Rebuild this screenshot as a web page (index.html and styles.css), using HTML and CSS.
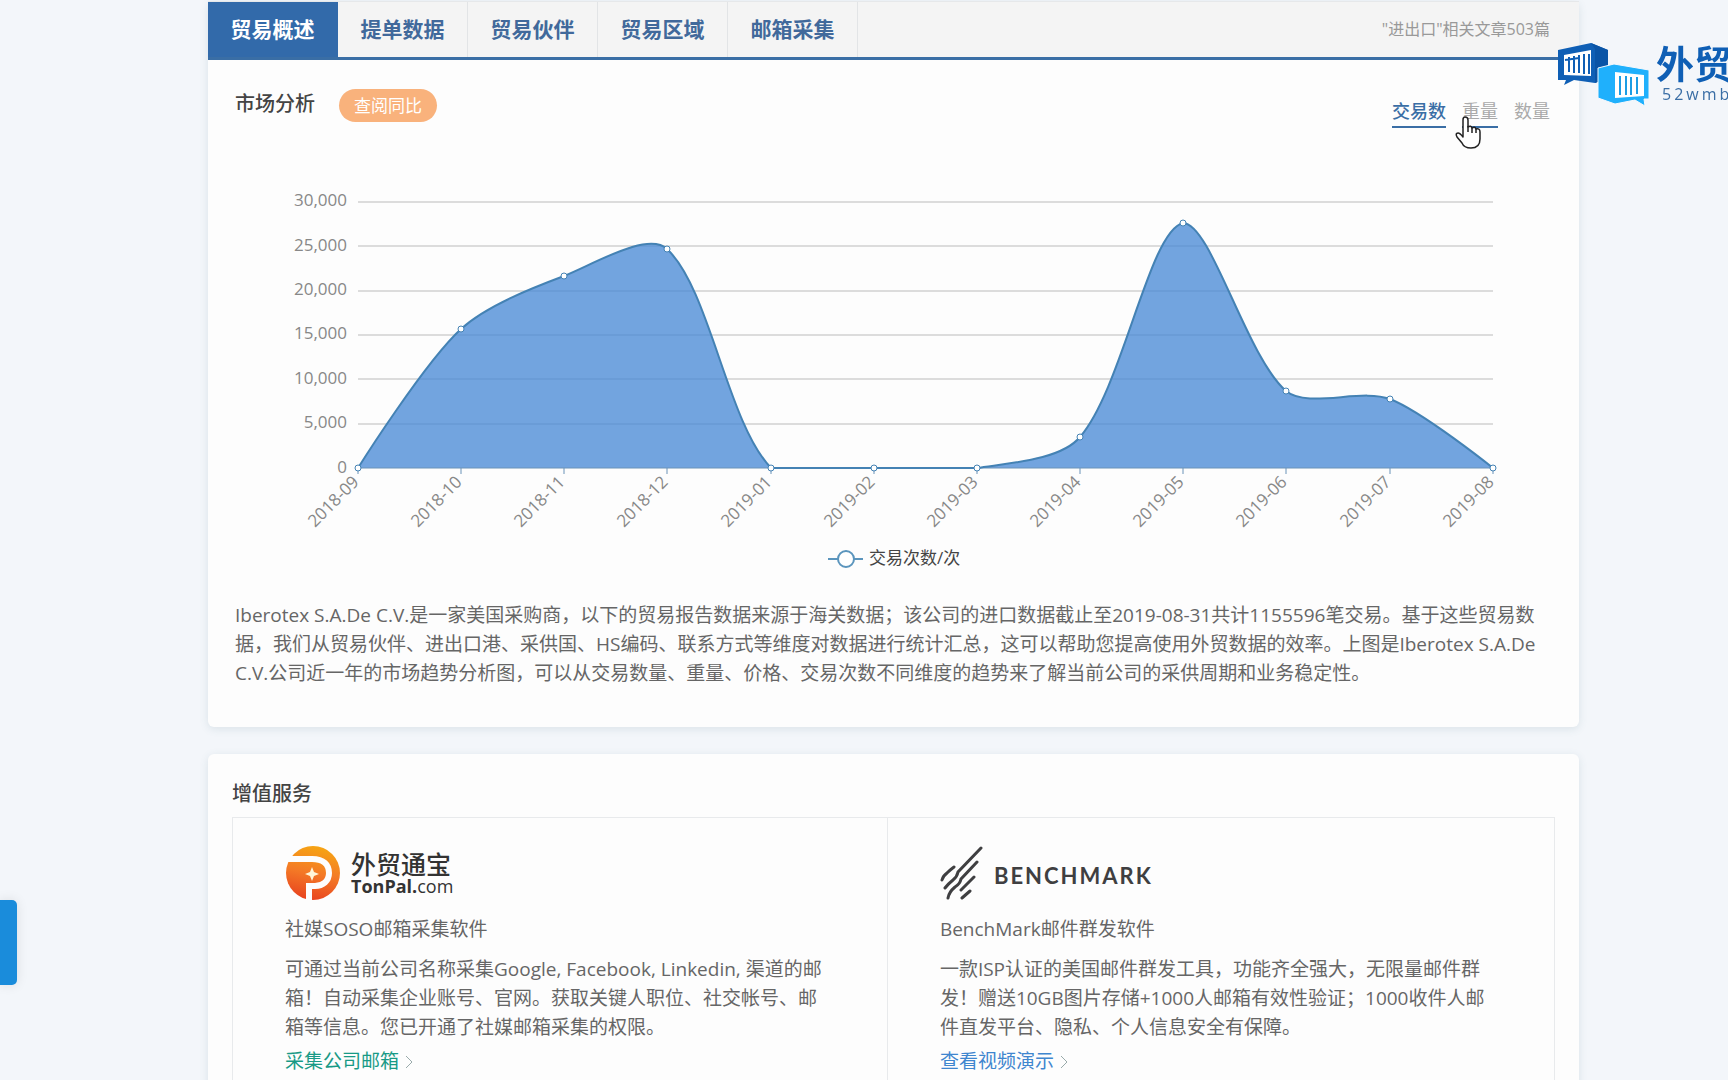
FILE: index.html
```html
<!DOCTYPE html>
<html lang="zh-CN">
<head>
<meta charset="utf-8">
<meta name="viewport" content="width=device-width, initial-scale=1">
<title>贸易概述</title>
<link rel="stylesheet" href="styles.css">
</head>
<body>
<main class="page">
  <section class="card">
    <nav class="tabs">
      <button class="tab tab-active" type="button">贸易概述</button>
      <button class="tab" type="button">提单数据</button>
      <button class="tab" type="button">贸易伙伴</button>
      <button class="tab" type="button">贸易区域</button>
      <button class="tab" type="button">邮箱采集</button>
      <a class="articles" href="#">"进出口"相关文章503篇</a>
    </nav>
    <header class="market-head">
      <h2 class="heading">市场分析</h2>
      <button class="pill" type="button">查阅同比</button>
      <div class="metrics">
        <button class="metric metric-active" type="button">交易数</button>
        <button class="metric metric-hover" type="button">重量</button>
        <button class="metric" type="button">数量</button>
      </div>
    </header>
    <div class="market-body">
      <svg class="chart" viewBox="0 0 1315 420" role="img" aria-label="交易次数">
        <path class="grid" d="M123 42H1258M123 86H1258M123 131H1258M123 175H1258M123 219H1258M123 264H1258"/>
        <path class="area" d="M123 308C123 308 189 203 226 169C251 146 297 128 329 116C359 104 413 71 432 89C475 129 492 262 536 308C554 308 608 308 639 308C670 308 711 308 742 308C774 303 826 300 845 277C888 227 914 71 948 63C976 63 1011 196 1051 231C1073 249 1126 228 1155 239C1188 252 1258 308 1258 308Z"/>
        <path class="axis" d="M123 308H1258M123 308V314M226 308V314M329 308V314M432 308V314M536 308V314M639 308V314M742 308V314M845 308V314M948 308V314M1051 308V314M1155 308V314M1258 308V314"/>
        <path class="curve" d="M123 308C123 308 189 203 226 169C251 146 297 128 329 116C359 104 413 71 432 89C475 129 492 262 536 308C554 308 608 308 639 308C670 308 711 308 742 308C774 303 826 300 845 277C888 227 914 71 948 63C976 63 1011 196 1051 231C1073 249 1126 228 1155 239C1188 252 1258 308 1258 308"/>
        <g class="dots">
          <circle cx="123" cy="308" r="3"/><circle cx="226" cy="169" r="3"/><circle cx="329" cy="116" r="3"/><circle cx="432" cy="89" r="3"/><circle cx="536" cy="308" r="3"/><circle cx="639" cy="308" r="3"/><circle cx="742" cy="308" r="3"/><circle cx="845" cy="277" r="3"/><circle cx="948" cy="63" r="3"/><circle cx="1051" cy="231" r="3"/><circle cx="1155" cy="239" r="3"/><circle cx="1258" cy="308" r="3"/>
        </g>
        <g class="labels">
          <text x="112" y="46">30,000</text>
          <text x="112" y="91">25,000</text>
          <text x="112" y="135">20,000</text>
          <text x="112" y="179">15,000</text>
          <text x="112" y="224">10,000</text>
          <text x="112" y="268">5,000</text>
          <text x="112" y="313">0</text>
          <text transform="translate(125 323) rotate(-45)">2018-09</text>
          <text transform="translate(228 323) rotate(-45)">2018-10</text>
          <text transform="translate(331 323) rotate(-45)">2018-11</text>
          <text transform="translate(434 323) rotate(-45)">2018-12</text>
          <text transform="translate(538 323) rotate(-45)">2019-01</text>
          <text transform="translate(641 323) rotate(-45)">2019-02</text>
          <text transform="translate(744 323) rotate(-45)">2019-03</text>
          <text transform="translate(847 323) rotate(-45)">2019-04</text>
          <text transform="translate(950 323) rotate(-45)">2019-05</text>
          <text transform="translate(1053 323) rotate(-45)">2019-06</text>
          <text transform="translate(1157 323) rotate(-45)">2019-07</text>
          <text transform="translate(1260 323) rotate(-45)">2019-08</text>
        </g>
        <path class="key" d="M593 399H628"/>
        <circle class="key" cx="611" cy="399" r="8"/>
        <text class="legend" x="634" y="404">交易次数/次</text>
      </svg>
      <p class="summary">Iberotex S.A.De C.V.是一家美国采购商，以下的贸易报告数据来源于海关数据；该公司的进口数据截止至2019-08-31共计1155596笔交易。基于这些贸易数据，我们从贸易伙伴、进出口港、采供国、HS编码、联系方式等维度对数据进行统计汇总，这可以帮助您提高使用外贸数据的效率。上图是Iberotex S.A.De C.V.公司近一年的市场趋势分析图，可以从交易数量、重量、价格、交易次数不同维度的趋势来了解当前公司的采供周期和业务稳定性。</p>
    </div>
  </section>

  <section class="card services">
    <h2 class="heading">增值服务</h2>
    <div class="service-grid">
      <article class="service">
        <div class="brand">
          <svg width="55" height="55" viewBox="0 0 55 55" aria-hidden="true">
            <defs><linearGradient id="tp" x1="0.600" y1="0" x2="0.400" y2="1"><stop offset="0" stop-color="#f6a513"/><stop offset="0.500" stop-color="#f47a26"/><stop offset="1" stop-color="#e8431f"/></linearGradient></defs>
            <circle cx="28" cy="27" r="27" fill="url(#tp)"/>
            <path d="M0 5H10L6 11H0z" fill="#fdfdfd"/>
            <path d="M0 13H27C39 13 44 19 44 27C44 35 38 40 30 40H24V55" fill="none" stroke="#fdfdfd" stroke-width="6"/>
            <path d="M27 21L29 26L34 28L29 30L27 35L25 30L20 28L25 26z" fill="#fff6d8"/>
          </svg>
          <div class="tonpal">
            <span class="tonpal-cn">外贸通宝</span>
            <span class="tonpal-en"><b>TonPal.</b>com</span>
          </div>
        </div>
        <h3 class="service-name">社媒SOSO邮箱采集软件</h3>
        <p class="service-text">可通过当前公司名称采集Google, Facebook, Linkedin, 渠道的邮箱！自动采集企业账号、官网。获取关键人职位、社交帐号、邮箱等信息。您已开通了社媒邮箱采集的权限。</p>
        <a class="more more-teal" href="#">采集公司邮箱<svg width="10" height="16" viewBox="0 0 10 16" aria-hidden="true"><path d="M2 2L8 8L2 14"/></svg></a>
      </article>
      <article class="service">
        <div class="brand">
          <svg width="43" height="55" viewBox="0 0 43 55" aria-hidden="true">
            <path d="M41 2L18 26Q17 31 13 34Q8 38 5 42M37 16L21 33Q20 38 15 41Q9 46 8 52M34 31L21 44M30 45L22 52M14 21Q10 24 7 27Q3 30 2 34" fill="none" stroke="#3f3f41" stroke-width="3" stroke-linecap="round"/>
          </svg>
          <span class="benchmark">BENCHMARK</span>
        </div>
        <h3 class="service-name">BenchMark邮件群发软件</h3>
        <p class="service-text">一款ISP认证的美国邮件群发工具，功能齐全强大，无限量邮件群发！赠送10GB图片存储+1000人邮箱有效性验证；1000收件人邮件直发平台、隐私、个人信息安全有保障。</p>
        <a class="more more-blue" href="#">查看视频演示<svg width="10" height="16" viewBox="0 0 10 16" aria-hidden="true"><path d="M2 2L8 8L2 14"/></svg></a>
      </article>
    </div>
  </section>
</main>

<button class="side-tab" type="button" aria-label="展开"></button>

<div class="watermark">
  <svg width="92" height="64" viewBox="0 0 92 64" aria-hidden="true">
    <path d="M0 7L33 0L50 7V35L37 40L16 37L6 42L8 37H0z" fill="#0f5fb5"/>
    <path d="M33 0L50 7V35L37 40V6z" fill="#0a54a6"/>
    <path d="M6 12L33 7V33L6 32z" fill="#fff"/>
    <path d="M11 14V29M16 13V30M21 12V30M26 11V31M31 11V31M7 17L21 15" stroke="#0f5fb5" stroke-width="2" fill="none"/>
    <path d="M40 25L56 21L91 27V56H86L87 63L77 57L57 61L40 55z" fill="#1fb0fc" stroke="#f5f7fb" stroke-width="1"/>
    <path d="M57 29L86 32V53L57 55z" fill="#fff"/>
    <path d="M62 33V52M68 33V52M73 34V52M79 34V51" stroke="#1c9de4" stroke-width="2" fill="none"/>
  </svg>
  <div class="watermark-text">
    <span class="watermark-cn">外贸</span>
    <span class="watermark-en">52wmb</span>
  </div>
</div>

<svg class="cursor" width="26" height="34" viewBox="0 0 26 34" aria-hidden="true">
  <path d="M8 21V4Q8 1 10 1Q13 1 13 4V11Q16 9 17 12Q20 10 21 13Q25 12 25 16V23Q25 32 16 32Q9 32 7 27L2 21Q0 17 3 17Q5 17 8 21z" fill="#fff" stroke="#222" stroke-width="1.500" stroke-linejoin="round"/>
  <path d="M13 10V16M17 12V17M21 13V17" stroke="#222" stroke-width="1.500" fill="none"/>
</svg>
</body>
</html>
```

FILE: styles.css
```css
* { box-sizing: border-box; }

body {
  margin: 0;
  background: #f3f6fa;
  color: #666;
  font-family: "Open Sans", "Noto Sans CJK SC", sans-serif;
  font-size: 19px;
  line-height: 29px;
}

h2, h3, p { margin: 0; }
button { border: 0; padding: 0; background: none; font: inherit; color: inherit; cursor: pointer; }
a { text-decoration: none; }

.page {
  display: flex;
  flex-direction: column;
  gap: 27px;
  margin: 1px 149px 0 208px;
}

.card {
  background: #fdfdfd;
  border-radius: 6px;
  box-shadow: 0 2px 8px rgba(70, 110, 130, 0.14);
}

/* tab bar */
.tabs {
  display: flex;
  height: 59px;
  background: #f4f4f4;
  border-top: 1px solid #e6e8ea;
  border-bottom: 3px solid #3a6ea5;
}
.tab {
  flex: 0 0 130px;
  border-right: 1px solid #e2e4e6;
  color: #41699b;
  font-size: 21px;
  font-weight: 700;
}
.tab-active { background: #326aaa; color: #fff; border-right-color: #326aaa; }
.articles {
  margin-left: auto;
  padding-right: 29px;
  align-self: center;
  color: #999;
  font-size: 16px;
}

/* market analysis */
.market-head {
  display: flex;
  align-items: flex-start;
  height: 100px;
  padding: 29px 29px 0 27px;
}
.heading { color: #444; font-size: 20px; font-weight: 500; }
.pill {
  margin-left: 24px;
  height: 33px;
  padding: 0 15px;
  border-radius: 17px;
  background: #f9b27c;
  color: #fff;
  font-size: 17px;
  line-height: 32px;
}
.metrics { display: flex; gap: 16px; margin-left: auto; padding-top: 7px; }
.metric {
  height: 32px;
  border-bottom: 2px solid transparent;
  color: #aaa;
  font-size: 18px;
}
.metric-active { color: #3a6ea5; border-color: #3a6ea5; font-weight: 500; }
.metric-hover { border-color: #3a6ea5; }
.market-body { padding: 0 29px 39px 27px; }
.summary { padding-top: 21px; }

/* chart */
.chart { display: block; width: 100%; height: auto; }
.grid { stroke: #dcdcdc; stroke-width: 2; fill: none; }
.area { fill: #4a8bd6; fill-opacity: 0.78; }
.curve { fill: none; stroke: #4482b4; stroke-width: 2; }
.axis { fill: none; stroke: #6b93b8; }
.dots circle { fill: #fff; stroke: #4482b4; }
.labels { fill: #888; font-size: 17px; text-anchor: end; }
.key { fill: #fff; stroke: #5b95bd; stroke-width: 2; }
.legend { fill: #444; font-size: 17px; }

/* value-added services */
.services { padding: 25px 24px 24px; }
.service-grid {
  display: grid;
  grid-template-columns: 99fr 101fr;
  margin-top: 9px;
  border: 1px solid #e8eaec;
}
.service { padding: 27px 52px 24px; }
.service + .service { border-left: 1px solid #e8eaec; }
.brand { display: flex; align-items: center; gap: 11px; height: 56px; }
.tonpal { display: flex; flex-direction: column; color: #333; }
.tonpal-cn { font-size: 25px; font-weight: 500; line-height: 25px; }
.tonpal-en { font-size: 18px; line-height: 18px; }
.benchmark {
  padding-top: 4px;
  color: #3f3f41;
  font-family: Lato, sans-serif;
  font-size: 22px;
  font-weight: 700;
  letter-spacing: 2px;
}
.service-name { margin-top: 14px; font-size: 19px; font-weight: 400; }
.service-text { margin-top: 11px; }
.more { display: flex; align-items: center; gap: 5px; margin-top: 5px; }
.more svg { fill: none; stroke: #9aa; }
.more-teal { color: #189a86; }
.more-blue { color: #3f86cf; }

/* floating pieces */
.side-tab {
  position: fixed;
  left: 0;
  top: 900px;
  width: 17px;
  height: 85px;
  border-radius: 0 5px 5px 0;
  background: #1a8cdb;
  box-shadow: 0 0 12px rgba(0, 0, 0, 0.1);
}
.watermark {
  position: fixed;
  right: 0;
  top: 43px;
  display: flex;
  gap: 6px;
  width: 170px;
  overflow: hidden;
  white-space: nowrap;
  color: #0f5fb5;
}
.watermark svg { flex: none; }
.watermark-text { display: flex; flex-direction: column; }
.watermark-cn { font-size: 38px; font-weight: 700; line-height: 40px; }
.watermark-en { padding-left: 6px; color: #3a6ea5; font-size: 16px; line-height: 22px; letter-spacing: 3px; }
.cursor { position: fixed; right: 247px; top: 116px; }
```
